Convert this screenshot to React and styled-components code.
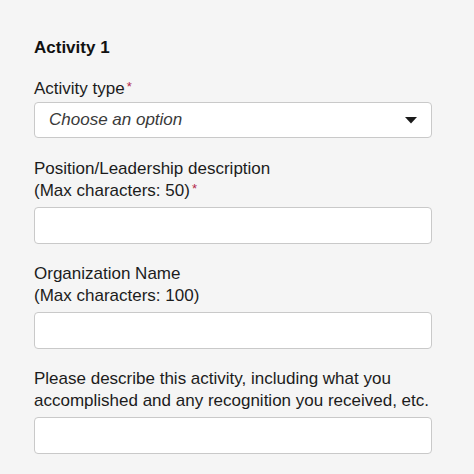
import React from "react";
import styled, { createGlobalStyle } from "styled-components";

const GlobalStyle = createGlobalStyle`
  html, body {
    margin: 0;
    padding: 0;
    background: #f5f5f5;
  }
  body {
    font-family: "Liberation Sans", Arial, sans-serif;
    color: #1c1c1c;
  }
`;

const Page = styled.div`
  width: 398px;
  padding: 36px 0 0 34px;
`;

const Heading = styled.h2`
  margin: 0 0 18px;
  font-size: 17px;
  line-height: 24px;
  font-weight: 700;
  color: #111;
`;

const Field = styled.div`
  display: flex;
  flex-direction: column;
  gap: ${(p) => (p.$tight ? "2px" : "5px")};
  margin-bottom: ${(p) => (p.$tight ? "20px" : "19px")};
`;

const Label = styled.label`
  font-size: 17px;
  line-height: 22px;
  color: #1c1c1c;
`;

const Star = styled.span`
  color: #b3264a;
  font-size: 13px;
  vertical-align: top;
  margin-left: 2px;
  line-height: 18px;
`;

const Box = styled.div`
  box-sizing: border-box;
  height: ${(p) => p.$h || 37}px;
  background: #fff;
  border: 1px solid #c9c9c9;
  border-radius: 4px;
  display: flex;
  align-items: center;
  padding: 0 14px;
`;

const Placeholder = styled.span`
  flex: 1;
  font-style: italic;
  font-size: 17px;
  color: #3a3a3a;
`;

const Caret = () => (
  <svg width="12" height="7" viewBox="0 0 12 7">
    <path d="M0 0h12L6 6.5z" fill="#1a1a1a" />
  </svg>
);

export default function App() {
  return (
    <>
      <GlobalStyle />
      <Page>
        <Heading>Activity 1</Heading>
        <Field $tight>
          <Label>
            Activity type<Star>*</Star>
          </Label>
          <Box $h={36}>
            <Placeholder>Choose an option</Placeholder>
            <Caret />
          </Box>
        </Field>
        <Field>
          <Label>
            Position/Leadership description
            <br />
            (Max characters: 50)<Star>*</Star>
          </Label>
          <Box />
        </Field>
        <Field>
          <Label>
            Organization Name
            <br />
            (Max characters: 100)
          </Label>
          <Box />
        </Field>
        <Field>
          <Label>
            Please describe this activity, including what you
            <br />
            accomplished and any recognition you received, etc.
          </Label>
          <Box />
        </Field>
      </Page>
    </>
  );
}
